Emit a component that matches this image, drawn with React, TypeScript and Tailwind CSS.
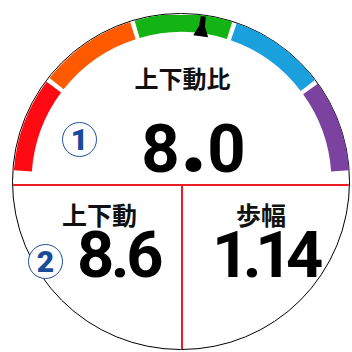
import React from "react";

// arc geometry for the gauge (viewBox of the circle)
const CX = 169;
const CY = 168.5;
const R_OUT = 168;
const R_IN = 150;

const pt = (deg: number, r: number) => {
  const a = (deg * Math.PI) / 180;
  return `${(CX + r * Math.sin(a)).toFixed(2)} ${(CY - r * Math.cos(a)).toFixed(2)}`;
};

const sector = (a1: number, a2: number) =>
  `M ${pt(a1, R_OUT)} A ${R_OUT} ${R_OUT} 0 0 1 ${pt(a2, R_OUT)} L ${pt(a2, R_IN)} A ${R_IN} ${R_IN} 0 0 0 ${pt(a1, R_IN)} Z`;

const segmentos = [
  { from: -86, to: -53.4, color: "#ff0a12" },
  { from: -51.8, to: -17.8, color: "#ff5a00" },
  { from: -16.2, to: 17.6, color: "#12b312" },
  { from: 19.2, to: 52.6, color: "#1aa0dc" },
  { from: 54.2, to: 86, color: "#7c42a0" },
];

const numFont = { fontFamily: "Roboto, 'Liberation Sans', sans-serif" };
const jpFont = { fontFamily: "'Noto Sans CJK JP', 'Noto Sans', sans-serif" };

const Circulado = ({ n }: { n: string }) => (
  <div className="w-[35px] h-[35px] rounded-full border-[1.5px] border-[#1d4f9c] bg-white flex items-center justify-center">
    <span className="text-[30px] font-black leading-none text-[#1a4b9b]" style={numFont}>
      {n}
    </span>
  </div>
);

export default function App() {
  return (
    <div className="relative w-[352px] h-[352px] bg-white overflow-hidden">
      <div className="pt-[13px] pl-[12px]">
        <div className="relative w-[338px] h-[337px] rounded-full border-[1.5px] border-black overflow-hidden flex flex-col">
          {/* parte de cima */}
          <div className="h-[172px] shrink-0 flex flex-col items-center border-b-2 border-[#ee1c25]">
            <p className="pt-[52px] pl-[3px] text-[24px] font-bold leading-none text-[#111]" style={jpFont}>
              上下動比
            </p>
            <p className="mt-[33px] pl-[25px] text-[67px] font-bold leading-[52px] text-black" style={numFont}>
              8<span className="inline-block mx-[4px] scale-150 origin-bottom">.</span>0
            </p>
          </div>

          {/* parte de baixo */}
          <div className="flex-1 flex">
            <div className="w-[168px] shrink-0 flex flex-col items-start pt-[16px]">
              <p className="ml-[49px] text-[25px] font-bold leading-none text-[#111]" style={jpFont}>
                上下動
              </p>
              <p className="ml-[64px] mt-[3px] text-[65px] font-bold leading-[50px] tracking-[-3.5px] text-black" style={numFont}>
                8.6
              </p>
            </div>
            <div className="flex-1 flex flex-col items-start pt-[16px] border-l-2 border-[#ee1c25]">
              <p className="ml-[53px] text-[25px] font-bold leading-none text-[#111]" style={jpFont}>
                歩幅
              </p>
              <p className="ml-[29px] mt-[3px] text-[65px] font-bold leading-[50px] tracking-[-6.5px] text-black" style={numFont}>
                1.14
              </p>
            </div>
          </div>
        </div>
      </div>

      {/* arcos coloridos e ponteiro */}
      <svg className="absolute left-[13.5px] top-[14.5px]" width="335" height="334" viewBox="1.5 1.5 335 334">
        {segmentos.map((s) => (
          <path key={s.color} d={sector(s.from, s.to)} fill={s.color} />
        ))}
        <g transform={`rotate(7.5 ${CX} ${CY})`}>
          <polygon
            points={`${CX - 2.5},${CY - 167} ${CX + 2.5},${CY - 167} ${CX + 3},${CY - 157} ${CX + 7.5},${CY - 147} ${CX - 7.5},${CY - 147} ${CX - 3},${CY - 157}`}
            fill="#000"
          />
        </g>
      </svg>

      {/* marcadores numerados */}
      <div className="absolute left-[62px] top-[122px]">
        <Circulado n="1" />
      </div>
      <div className="absolute left-[28px] top-[244px]">
        <Circulado n="2" />
      </div>
    </div>
  );
}
